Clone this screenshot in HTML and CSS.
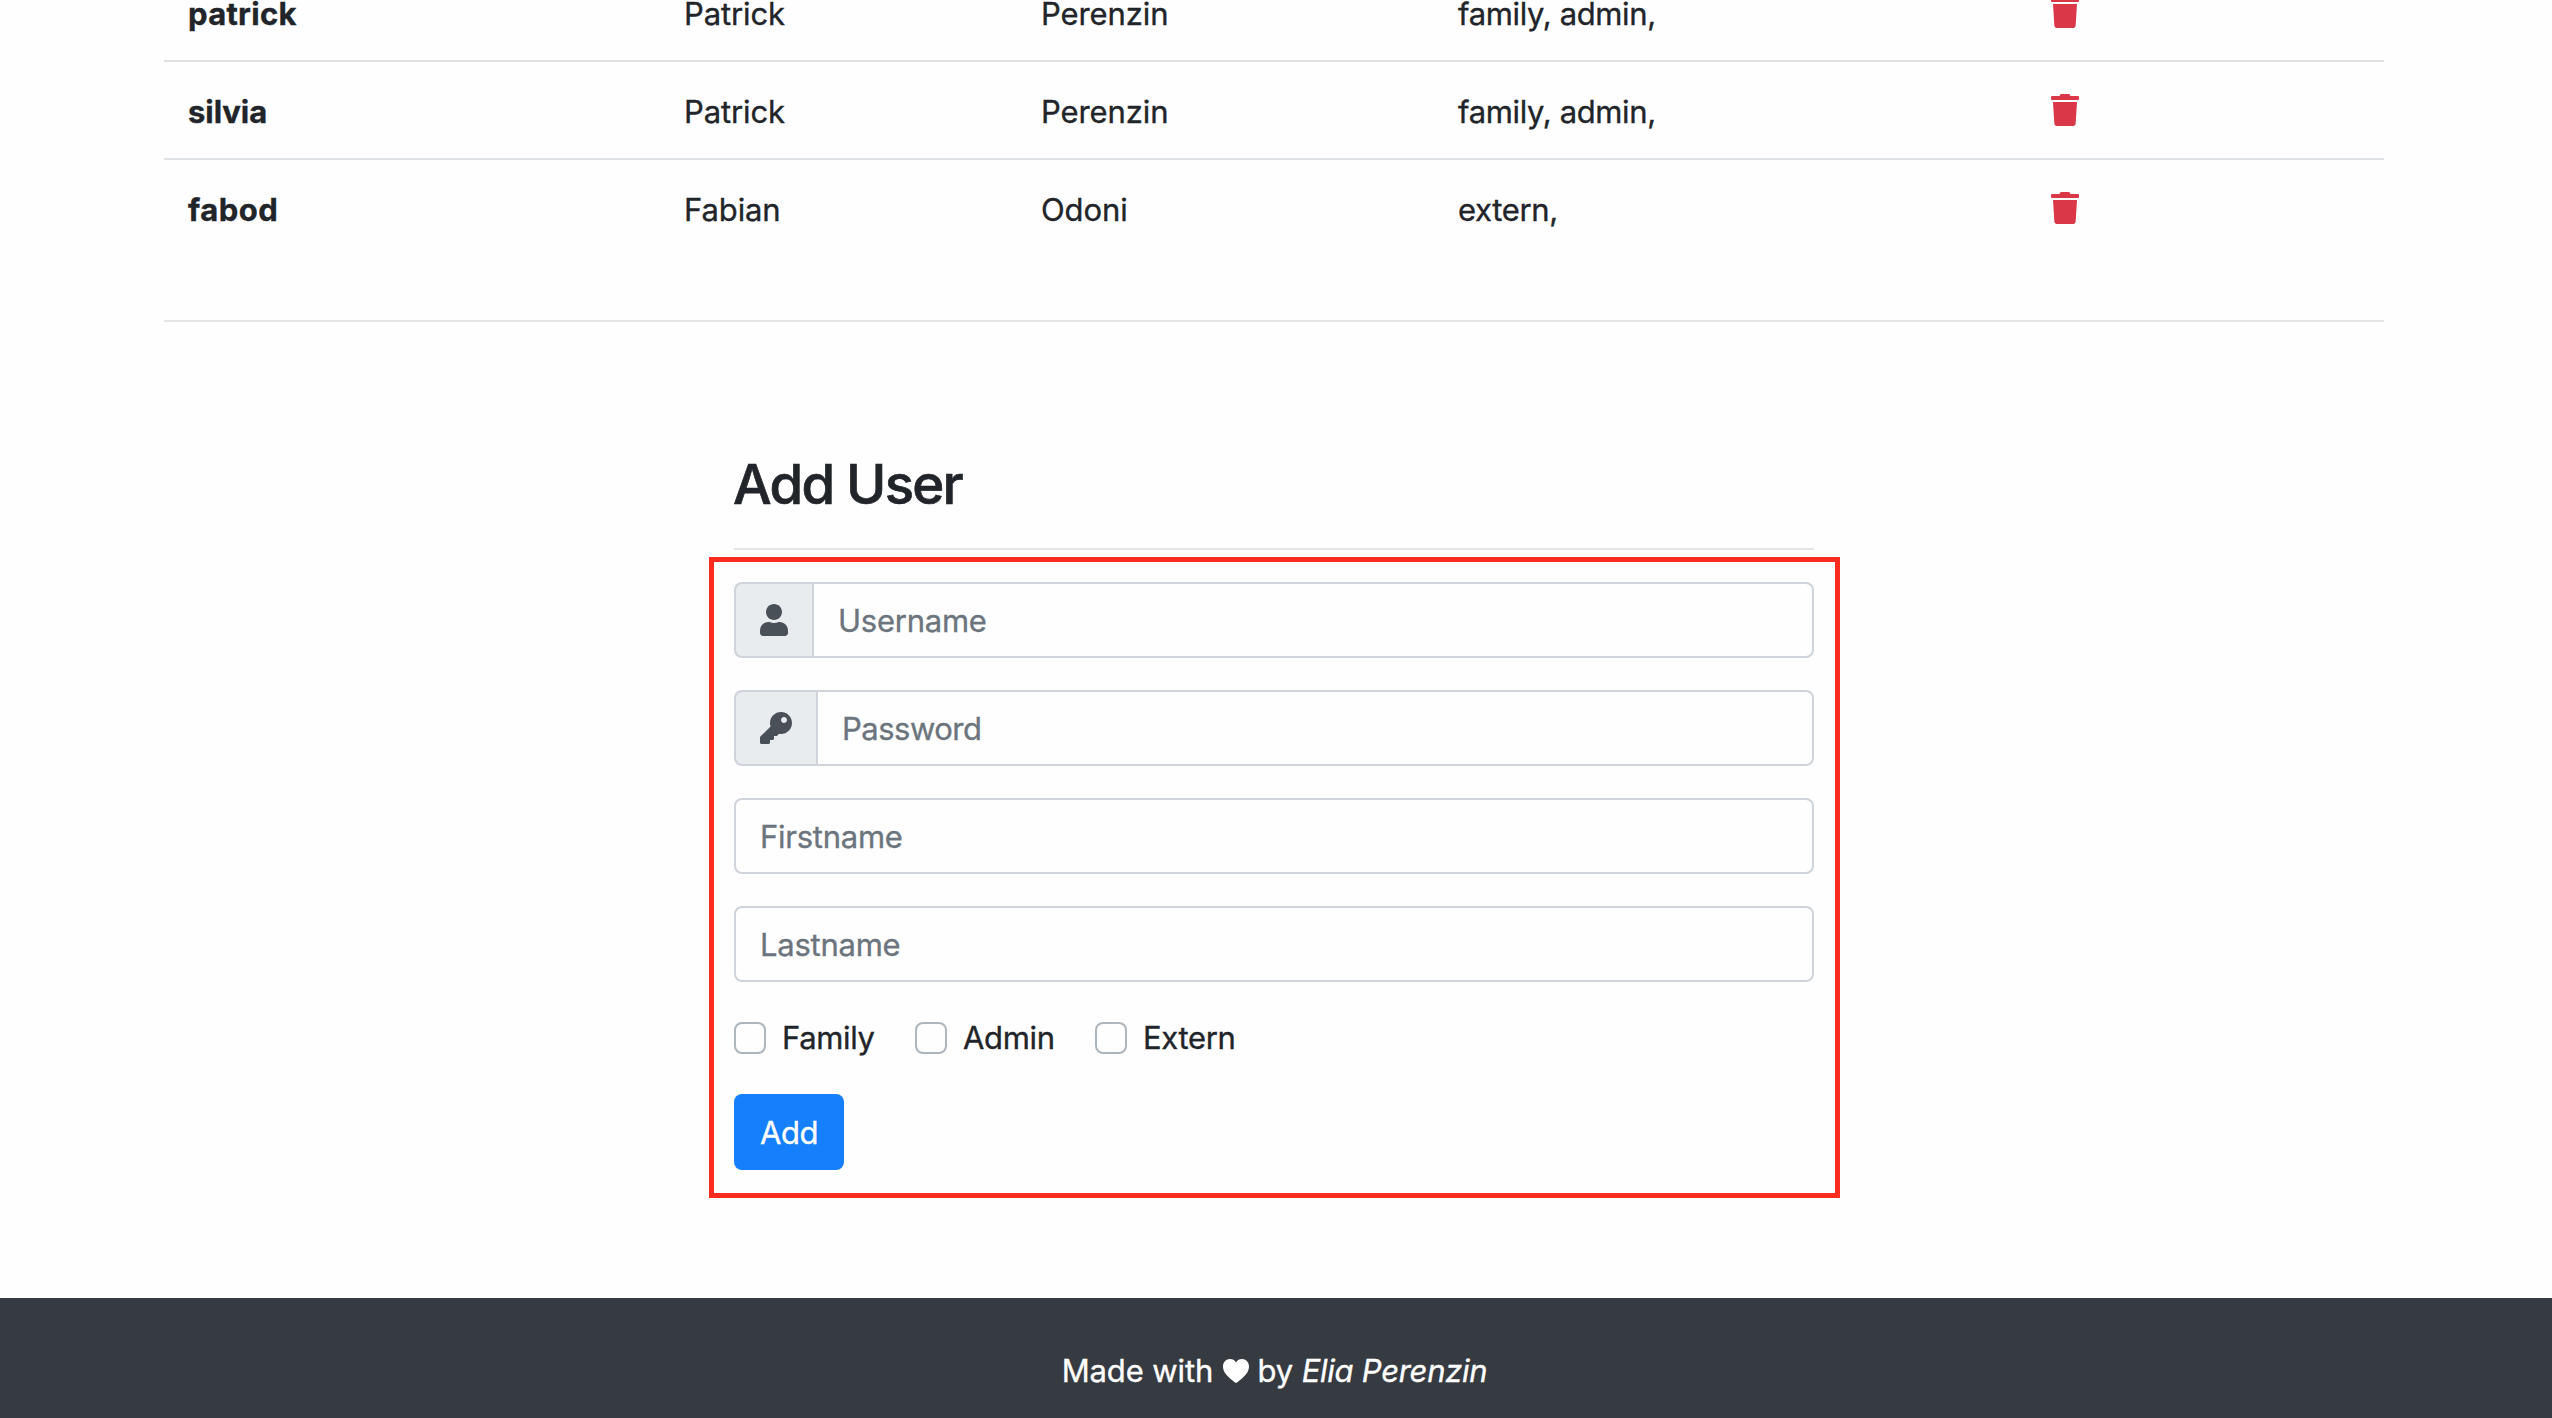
FILE: index.html
```
<!DOCTYPE html>
<html lang="en">
<head>
<meta charset="utf-8">
<title>Users</title>
<link rel="stylesheet" href="styles.css">
</head>
<body>
<svg class="sprite" aria-hidden="true">
  <symbol id="trash" viewBox="0 0 448 512"><path d="M432 32H312l-9.4-18.7A24 24 0 0 0 281.1 0H166.8a23.72 23.72 0 0 0-21.4 13.3L136 32H16A16 16 0 0 0 0 48v32a16 16 0 0 0 16 16h416a16 16 0 0 0 16-16V48a16 16 0 0 0-16-16zM32 128l21.2 339a48 48 0 0 0 47.9 45h245.8a48 48 0 0 0 47.9-45L416 128z"/></symbol>
</svg>
<main class="container">
  <table class="users">
    <colgroup><col class="c-user"><col class="c-first"><col class="c-last"><col class="c-groups"><col></colgroup>
    <tbody>
      <tr><th>patrick</th><td>Patrick</td><td>Perenzin</td><td class="groups">family, admin,</td><td><svg class="trash"><use href="#trash"/></svg></td></tr>
      <tr><th class="narrow">silvia</th><td>Patrick</td><td>Perenzin</td><td class="groups">family, admin,</td><td><svg class="trash"><use href="#trash"/></svg></td></tr>
      <tr><th class="wide">fabod</th><td>Fabian</td><td>Odoni</td><td class="groups">extern,</td><td><svg class="trash"><use href="#trash"/></svg></td></tr>
    </tbody>
  </table>
  <hr class="rule">
  <section class="add-user">
    <h3 class="title">Add User</h3>
    <hr class="rule">
    <form class="form">
      <div class="group">
        <span class="prepend"><svg class="icon-user" viewBox="0 0 448 512"><path d="M224 256c70.7 0 128-57.3 128-128S294.7 0 224 0 96 57.3 96 128s57.3 128 128 128zm89.6 32h-16.7c-22.2 10.2-46.9 16-72.9 16s-50.6-5.8-72.9-16h-16.7C60.2 288 0 348.2 0 422.4V464c0 26.5 21.5 48 48 48h352c26.5 0 48-21.5 48-48v-41.6c0-74.2-60.2-134.4-134.4-134.4z"/></svg></span>
        <input class="input" type="text" placeholder="Username">
      </div>
      <div class="group">
        <span class="prepend"><svg class="icon-key" viewBox="0 0 512 512"><path d="M512 176.001C512 273.203 433.202 352 336 352c-11.22 0-22.19-1.062-32.827-3.069l-24.012 27.014A23.999 23.999 0 0 1 261.223 384H224v40c0 13.255-10.745 24-24 24h-40v40c0 13.255-10.745 24-24 24H24c-13.255 0-24-10.745-24-24v-78.059c0-6.365 2.529-12.47 7.029-16.971l161.802-161.802C163.108 213.814 160 195.271 160 176 160 78.798 238.797.001 335.999 0 433.488-.001 512 78.511 512 176.001zM336 128c0 26.51 21.49 48 48 48s48-21.49 48-48-21.49-48-48-48-48 21.49-48 48z"/></svg></span>
        <input class="input tight" type="password" placeholder="Password">
      </div>
      <div class="group"><input class="input" type="text" placeholder="Firstname"></div>
      <div class="group"><input class="input" type="text" placeholder="Lastname"></div>
      <div class="checks">
        <label class="check"><input class="box" type="checkbox"><span>Family</span></label>
        <label class="check"><input class="box" type="checkbox"><span>Admin</span></label>
        <label class="check"><input class="box" type="checkbox"><span>Extern</span></label>
      </div>
      <button class="btn" type="button">Add</button>
    </form>
  </section>
</main>
<footer class="footer"><span class="made">Made with</span> <svg class="heart" viewBox="0 0 26 24"><path d="M13 24C11.5 23.2 8.500 20.800 6 18.500C2.500 15.300 0 12 0 7.700C0 3.200 3 0 7 0C9.600 0 11.800 1.200 13 3.400C14.200 1.200 16.400 0 19 0C23 0 26 3.200 26 7.700C26 12 23.500 15.300 20 18.500C17.500 20.800 14.500 23.200 13 24Z"/></svg> by <em>Elia Perenzin</em></footer>
</body>
</html>
```
FILE: styles.css
```
* { box-sizing: border-box; }

html, body { height: 100%; }

body {
  display: flex;
  flex-direction: column;
  margin: 0;
  overflow: hidden;
  background: #fefefe;
  color: #212529;
  font: 400 31px/48px Inter, "Liberation Sans", sans-serif;
  letter-spacing: -0.1px;
  -webkit-text-stroke: 0.35px currentColor;
}

svg { fill: currentColor; }

.sprite { display: none; }

.container {
  flex: none;
  width: 2220px;
  height: 1298px;
  margin-left: 164px;
  overflow: hidden;
  display: flow-root;
}

.users {
  width: 100%;
  margin: -38px 0 64px;
  border-collapse: separate;
  border-spacing: 0;
  table-layout: fixed;
}

.users th,
.users td {
  height: 98px;
  padding: 26px 24px 22px;
  border-top: 2px solid #dee2e6;
  text-align: left;
  vertical-align: top;
}

.users th { letter-spacing: 0.3px; }
.users .narrow { letter-spacing: -0.050px; }
.users .wide { letter-spacing: 0.5px; }
.users .groups { letter-spacing: -0.35px; }

.c-user { width: 496px; }
.c-first { width: 357px; }
.c-last { width: 417px; }
.c-groups { width: 593px; }

.trash {
  display: block;
  width: 28px;
  height: 32px;
  margin-top: 6px;
  color: #da3849;
}

.rule {
  height: 2px;
  margin: 0;
  border: 0;
  background: #e5e5e5;
}

.add-user {
  width: 1080px;
  margin-left: 570px;
  padding-top: 129px;
}

.title {
  margin: 0 0 30px;
  text-indent: -1px;
  font-size: 54.500px;
  font-weight: 500;
  line-height: 67px;
  letter-spacing: -1.750px;
  -webkit-text-stroke-width: 0.7px;
}

.form {
  position: relative;
  display: flex;
  flex-direction: column;
  align-items: stretch;
  gap: 32px;
  margin-top: 32px;
}

/* highlight frame drawn over the form */
.form::before {
  content: "";
  position: absolute;
  inset: -25px -26px -28px -25px;
  border: 5px solid #fd2c1f;
  pointer-events: none;
}

.group { display: flex; height: 76px; }

.prepend {
  display: flex;
  align-items: center;
  padding: 0 24px;
  border: 2px solid #ced4da;
  border-right: 0;
  border-radius: 8px 0 0 8px;
  background: #e9ecef;
  color: #495057;
}

.icon-user { width: 28px; height: 32px; }
.icon-key { width: 32px; height: 32px; }

.input {
  flex: 1;
  min-width: 0;
  padding: 1px 24px 0;
  border: 2px solid #ced4da;
  border-radius: 8px;
  background: transparent;
  font: inherit;
  letter-spacing: -0.250px;
}

.input.tight { letter-spacing: -0.500px; }
.prepend + .input { border-radius: 0 8px 8px 0; }
.input::placeholder { color: #6c757d; opacity: 1; }

.checks {
  display: grid;
  grid-template-columns: 181px 180px auto;
  height: 48px;
}

.check {
  display: flex;
  align-items: center;
  gap: 16px;
  height: 48px;
  letter-spacing: -0.350px;
}

.box {
  appearance: none;
  width: 32px;
  height: 32px;
  margin: 0;
  border: 2px solid #adb5bd;
  border-radius: 8px;
  background: #fefefe;
}

.btn {
  align-self: flex-start;
  width: 110px;
  height: 76px;
  padding: 1px 0 0;
  border: 0;
  border-radius: 8px;
  background: #167ffc;
  color: #fff;
  font: inherit;
  letter-spacing: -0.500px;
}

.footer {
  flex: 1;
  padding: 49px 3px 0 0;
  background: #363a41;
  color: #fff;
  text-align: center;
}

.made { margin-right: 1px; }

.footer em { letter-spacing: -0.280px; }

.heart { width: 26px; height: 24px; vertical-align: -1px; }
```
